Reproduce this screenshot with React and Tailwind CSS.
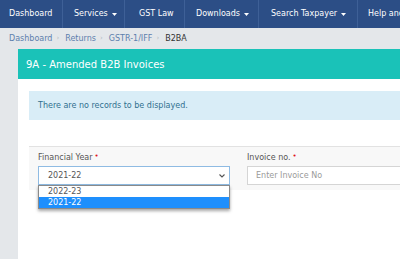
import React from 'react';

const navItems = [
    { label: 'Dashboard', caret: false, w: 'w-[63px]', pl: 'pl-[9px]' },
    { label: 'Services', caret: true, w: 'w-[62px]', pl: 'pl-[11px]' },
    { label: 'GST Law', caret: false, w: 'w-[60px]', pl: 'pl-[14px]' },
    { label: 'Downloads', caret: true, w: 'w-[74px]', pl: 'pl-[11px]' },
    { label: 'Search Taxpayer', caret: true, w: 'w-[99px]', pl: 'pl-[12px]' },
    { label: 'Help and Taxpayer Facilities', caret: false, w: 'w-[120px]', pl: 'pl-[10px]' },
];

const Caret = () => (
    <svg width="5" height="3" viewBox="0 0 5 3" className="ml-[4px] mt-[1px]">
        <path d="M0 0 L5 0 L2.5 3 Z" fill="white" />
    </svg>
);

const Crumb = ({ children }) => (
    <span className="text-[#5d80ad]">{children}</span>
);

const Sep = () => <span className="text-[#b5bcc4] ml-[4px] mr-[6px] text-[7px]">›</span>;

const Required = () => <span className="text-[#e1141b] text-[7px] relative -top-[2px] ml-[2px]">•</span>;

export default function App() {
    return (
        <div className="w-[400px] h-[259px] overflow-hidden bg-[#e4e7ea] font-['DejaVu_Sans',sans-serif] flex flex-col">
            <nav className="h-[28px] shrink-0 bg-[#2c4e86] flex text-white text-[8px] whitespace-nowrap overflow-hidden">
                {navItems.map((item) => (
                    <div
                        key={item.label}
                        className={`${item.w} ${item.pl} shrink-0 flex items-center border-r border-[#3e6097]`}
                    >
                        {item.label}
                        {item.caret && <Caret />}
                    </div>
                ))}
            </nav>

            <div className="h-[21px] shrink-0 flex items-center pl-[9px] text-[8px] whitespace-nowrap">
                <Crumb>Dashboard</Crumb>
                <Sep />
                <Crumb>Returns</Crumb>
                <Sep />
                <Crumb>GSTR-1/IFF</Crumb>
                <Sep />
                <span className="text-[#333333]">B2BA</span>
            </div>

            <div className="ml-[18px] bg-white flex-1 flex flex-col">
                <div className="h-[30px] shrink-0 bg-[#1ac2b8] text-white text-[10px] flex items-center pl-[8px] whitespace-nowrap">
                    9A - Amended B2B Invoices
                </div>

                <div className="pl-[11px] pt-[12px]">
                    <div className="h-[29px] bg-[#d9edf7] text-[#31708f] text-[8px] flex items-center pl-[9px]">
                        There are no records to be displayed.
                    </div>

                    <div className="mt-[26px] border-t border-[#e2e2e2] bg-[#f8f8f8] h-[44px] flex gap-[17px] pl-[9px] pt-[6px] text-[8px]">
                        <div className="w-[192px] shrink-0 relative">
                            <div className="h-[10px] leading-[10px] text-[#555555] flex items-start">
                                Financial Year<Required />
                            </div>
                            <div className="mt-[3px] h-[19px] bg-white border border-[#8fbbe3] flex items-center justify-between pl-[9px] pr-[4px] text-[#555555]">
                                <span>2021-22</span>
                                <svg width="6" height="4" viewBox="0 0 6 4">
                                    <path d="M0.5 0.5 L3 3 L5.5 0.5" stroke="#555" strokeWidth="1.1" fill="none" />
                                </svg>
                            </div>
                            <div className="absolute left-0 top-[32px] w-[192px] bg-white border border-[#8a8a8a] shadow-[0_2px_3px_rgba(0,0,0,0.35)] z-10">
                                <div className="h-[11px] leading-[11px] pl-[9px] text-[#555555]">2022-23</div>
                                <div className="h-[11px] leading-[11px] pl-[9px] bg-[#1e8ffd] text-white">2021-22</div>
                            </div>
                        </div>
                        <div className="flex-1">
                            <div className="h-[10px] leading-[10px] text-[#555555] flex items-start">
                                Invoice no.<Required />
                            </div>
                            <div className="mt-[3px] h-[19px] bg-white border border-r-0 border-[#d5d5d5] flex items-center pl-[8px] text-[#9a9a9a]">
                                Enter Invoice No
                            </div>
                        </div>
                    </div>
                </div>
            </div>
        </div>
    );
}
